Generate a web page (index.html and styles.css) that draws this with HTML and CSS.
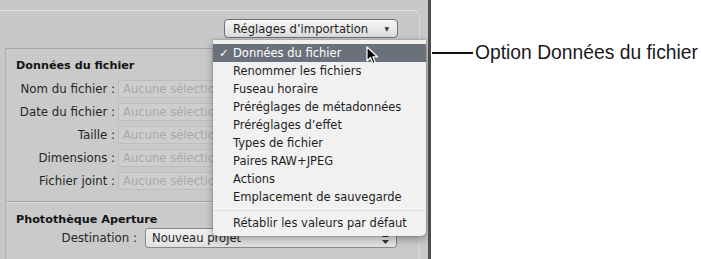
FILE: index.html
```html
<!DOCTYPE html>
<html>
<head>
   <title>Réglages d'importation</title>
   <link rel="stylesheet" href="styles.css">
</head>
<body>
   <div class="window">
       <div class="frame">
           <div class="toolbar">
               <div class="popup-btn">
                   <span>Réglages d’importation</span>
                   <span class="btn-arrow">▼</span>
               </div>
           </div>

           <div class="panel">
               <h2 class="section-title">Données du fichier</h2>
               <div class="field-grid">
                   <label>Nom du fichier :</label><div class="field">Aucune sélection</div>
                   <label>Date du fichier :</label><div class="field">Aucune sélection</div>
                   <label>Taille :</label><div class="field">Aucune sélection</div>
                   <label>Dimensions :</label><div class="field">Aucune sélection</div>
                   <label>Fichier joint :</label><div class="field">Aucune sélection</div>
               </div>

               <div class="separator"></div>

               <h2 class="section-title">Photothèque Aperture</h2>
               <div class="dest-row">
                   <label>Destination :</label>
                   <div class="select">
                       <span>Nouveau projet</span>
                       <svg class="updown" width="7" height="11" viewBox="0 0 7 11">
                           <path d="M3.5 0 L7 4 L0 4 Z M0 7 L7 7 L3.5 11 Z" fill="#333"/>
                       </svg>
                   </div>
               </div>
           </div>
       </div>

       <ul class="menu">
           <li class="selected"><span class="check">✓</span>Données du fichier</li>
           <li>Renommer les fichiers</li>
           <li>Fuseau horaire</li>
           <li>Préréglages de métadonnées</li>
           <li>Préréglages d’effet</li>
           <li>Types de fichier</li>
           <li>Paires RAW+JPEG</li>
           <li>Actions</li>
           <li>Emplacement de sauvegarde</li>
           <li class="menu-sep"></li>
           <li>Rétablir les valeurs par défaut</li>
       </ul>

       <svg class="cursor" width="13" height="19" viewBox="0 0 13 19">
           <path d="M1 1 L1 15 L4.5 11.5 L7 17.5 L9.3 16.5 L6.8 10.8 L11.5 10.8 Z" fill="#000" stroke="#fff" stroke-width="1.2" stroke-linejoin="round"/>
       </svg>
   </div>

   <div class="callout">
       <span class="callout-line"></span>
       <span class="callout-text">Option Données du fichier</span>
   </div>
</body>
</html>
```

FILE: styles.css
```css
* {
    margin: 0;
    padding: 0;
    box-sizing: border-box;
}

body {
    display: flex;
    align-items: flex-start;
    background: #FFFFFF;
    font-family: "DejaVu Sans", Verdana, sans-serif;
    width: 701px;
    height: 259px;
    overflow: hidden;
}

.window {
    position: relative;
    width: 431px;
    height: 259px;
    flex-shrink: 0;
    background: #c8c8c8;
    border-right: 3px solid #4c4c4c;
    overflow: hidden;
}

.frame {
    margin-top: 10px;
    margin-right: 8px;
    height: 249px;
    border-top: 1px solid #e4e4e4;
    border-right: 1px solid #d8d8d8;
    border-top-right-radius: 7px;
}

.toolbar {
    height: 37px;
    display: flex;
    justify-content: flex-end;
    padding-top: 8px;
    padding-right: 21px;
}

.popup-btn {
    width: 174px;
    height: 19px;
    display: flex;
    align-items: center;
    justify-content: space-between;
    padding: 0 8px 0 8px;
    border: 1px solid #6f6f6f;
    border-radius: 4px;
    background: linear-gradient(#f6f6f6, #dcdcdc);
    font-size: 11.6px;
    color: #1e1e1e;
}

.btn-arrow {
    font-size: 6px;
    color: #333;
}

.panel {
    margin-left: 5px;
    height: 212px;
    border-top: 1px solid #a6a6a6;
    border-left: 1px solid #b2b2b2;
    background: #cacaca;
    padding-top: 9px;
}

.section-title {
    font-size: 11.2px;
    font-weight: bold;
    color: #141414;
    line-height: 16px;
    padding-left: 10px;
}

.field-grid {
    display: grid;
    grid-template-columns: 109px 160px;
    grid-auto-rows: 18px;
    column-gap: 3px;
    row-gap: 5px;
    margin-top: 6px;
    align-items: center;
}

.field-grid label,
.dest-row label {
    text-align: right;
    font-size: 11.8px;
    color: #262626;
}

.field {
    height: 18px;
    line-height: 16px;
    padding-left: 4px;
    border: 1px solid #bdbdbd;
    border-radius: 2px;
    background: #cecece;
    font-size: 11.6px;
    color: #a9a9a9;
    white-space: nowrap;
    overflow: hidden;
}

.separator {
    height: 1px;
    background: #a9a9a9;
    margin: 11px 0 10px;
    box-shadow: 0 1px 0 #dadada;
}

.dest-row {
    display: flex;
    align-items: center;
    gap: 8px;
}

.dest-row label {
    width: 131px;
}

.select {
    width: 252px;
    height: 20px;
    display: flex;
    align-items: center;
    justify-content: space-between;
    padding: 0 7px 0 6px;
    border: 1px solid #8a8a8a;
    border-radius: 3px;
    background: linear-gradient(#f2f2f2, #e0e0e0);
    font-size: 11.6px;
    color: #1e1e1e;
}

.menu {
    position: absolute;
    left: 213px;
    top: 40px;
    width: 213px;
    padding: 4px 0;
    list-style: none;
    background: #f1f1f1;
    border-radius: 0 0 5px 5px;
    box-shadow: 0 3px 8px rgba(0, 0, 0, 0.35), 0 0 0 1px rgba(0, 0, 0, 0.08);
}

.menu li {
    height: 18px;
    line-height: 18px;
    padding-left: 20px;
    font-size: 11.5px;
    color: #1e1e1e;
    white-space: nowrap;
    position: relative;
}

.menu li.selected {
    background: #6b717b;
    color: #ffffff;
}

.check {
    position: absolute;
    left: 6px;
    top: 0;
}

.menu li.menu-sep {
    border-top: 1px solid #dedede;
    margin-top: 4px;
    height: 4px;
}

.cursor {
    position: absolute;
    left: 366px;
    top: 46px;
}

.callout {
    display: flex;
    align-items: center;
    margin-top: 42px;
    margin-left: 1px;
    gap: 2px;
}

.callout-line {
    width: 41px;
    height: 2px;
    background: #111;
}

.callout-text {
    font-family: "Liberation Sans", Arial, sans-serif;
    font-size: 19.3px;
    line-height: 22px;
    color: #1a1a1a;
    white-space: nowrap;
}
```
